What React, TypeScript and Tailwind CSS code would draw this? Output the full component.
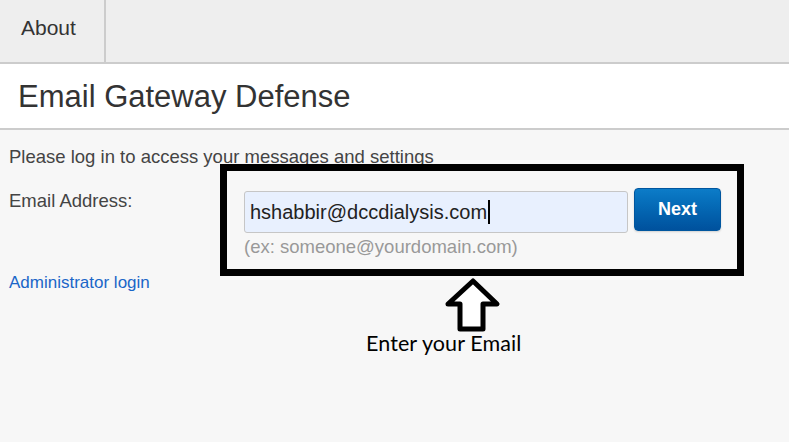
import React from 'react'

function UpArrow() {
  return (
    <svg width="60" height="60" viewBox="0 0 60 60" className="absolute left-[443px] top-[276px]">
      <polygon
        points="30,5 54,28 40,28 40,53 17,53 17,28 5,28"
        fill="white"
        stroke="black"
        strokeWidth={5}
        strokeLinejoin="round"
      />
    </svg>
  )
}

export default function App() {
  return (
    <div className="min-h-screen bg-white font-['Liberation_Sans',Arial,sans-serif]">
      <div className="relative w-[789px] h-[442px] bg-[#f7f7f7]">
        {/* top nav */}
        <div className="flex h-[64px] bg-[#eeeeee] border-b-2 border-[#cccccc]">
          <div className="w-[106px] border-r-2 border-[#cccccc] pl-[21px] pt-[12px] text-[21px] text-[#333]">
            About
          </div>
        </div>

        {/* title */}
        <div className="flex items-center h-[66px] bg-white border-b-2 border-[#cccccc] pl-[18px]">
          <h1 className="text-[31px] text-[#333] leading-none">Email Gateway Defense</h1>
        </div>

        {/* form */}
        <div className="pl-[9px] pt-[16px]">
          <p className="text-[18.5px] leading-[21px] text-[#444]">
            Please log in to access your messages and settings
          </p>
          <div className="flex mt-[21px]">
            <div className="w-[235px] pt-[2px] text-[18.5px] leading-[21px] text-[#444]">Email Address:</div>
            <div className="flex flex-col">
              <div className="flex items-start">
                <div className="flex items-center w-[384px] h-[42px] mt-[3px] bg-[#e8f0fe] border border-[#c6c6c6] rounded-[3px] pl-[5px] text-[20px] text-[#222]">
                  hshabbir@dccdialysis.com
                  <span className="inline-block w-[1.5px] h-[24px] bg-black ml-[1px]" />
                </div>
                <button className="ml-[6px] w-[87px] h-[43px] rounded-[4px] border border-[#00569f] bg-gradient-to-b from-[#0c7cc8] to-[#00519d] text-white font-bold text-[18px] shadow-[0_1px_2px_rgba(0,0,0,0.15)]">
                  Next
                </button>
              </div>
              <div className="mt-[3px] text-[18.5px] leading-[21px] text-[#999]">
                (ex: someone@yourdomain.com)
              </div>
            </div>
          </div>
          <a className="block mt-[16px] text-[17px] leading-[20px] text-[#1a66c8]">Administrator login</a>
        </div>

        {/* annotation */}
        <div className="absolute left-[220px] top-[164px] w-[524px] h-[112px] border-[7px] border-black" />
        <UpArrow />
        <div className="absolute left-[366px] top-[327px] text-[21.5px] text-black font-['Lato',sans-serif] tracking-[0.1px]">
          Enter your Email
        </div>
      </div>
    </div>
  )
}
